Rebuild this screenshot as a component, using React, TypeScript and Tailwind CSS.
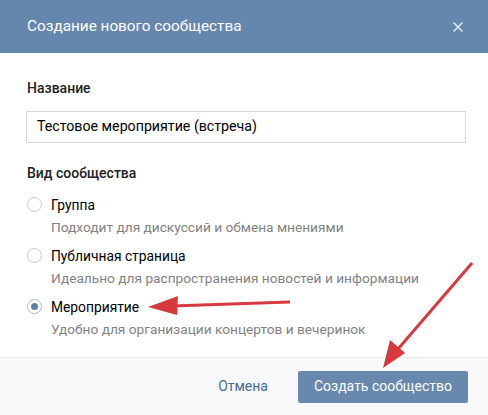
import { X } from "lucide-react";

const options = [
  { title: "Группа", desc: "Подходит для дискуссий и обмена мнениями", checked: false },
  { title: "Публичная страница", desc: "Идеально для распространения новостей и информации", checked: false },
  { title: "Мероприятие", desc: "Удобно для организации концертов и вечеринок", checked: true },
];

export default function App() {
  return (
    <div
      className="relative w-[488px] h-[415px] bg-white overflow-hidden flex flex-col"
      style={{ fontFamily: "Roboto, 'Open Sans', sans-serif" }}
    >
      {/* Header */}
      <div className="h-[53px] shrink-0 bg-[#6587ae] flex items-center justify-between pl-[27px] pr-[22px]">
        <span className="text-[15.3px] text-white leading-none">Создание нового сообщества</span>
        <X className="w-[16px] h-[16px] text-[#dfe6ee]" strokeWidth={2.5} />
      </div>

      {/* Body */}
      <div className="flex-1 pt-[26px] pl-[26px] pr-[22px]">
        <div className="text-[14px] font-medium text-[#222] leading-[18px] pl-px">Название</div>
        <div className="mt-[14px] h-[32px] border border-[#d3d9de] flex items-center px-[10px] text-[14.2px] text-[#000]">
          Тестовое мероприятие (встреча)
        </div>
        <div className="mt-[21px] text-[14px] font-medium text-[#222] leading-[18px] pl-px">Вид сообщества</div>

        <div className="mt-[14px] flex flex-col gap-[11px]">
          {options.map((o) => (
            <div key={o.title} className="flex gap-[9px] pl-px">
              <div
                className={
                  o.checked
                    ? "w-[15px] h-[15px] mt-[1px] rounded-full border border-[#a9bad0] flex items-center justify-center shrink-0"
                    : "w-[15px] h-[15px] mt-[1px] rounded-full border border-[#c5ccd4] flex items-center justify-center shrink-0"
                }
              >
                {o.checked && <div className="w-[7px] h-[7px] rounded-full bg-[#5e81a8]" />}
              </div>
              <div className="flex flex-col gap-[4px]">
                <span className="text-[13.8px] text-[#000] leading-[18px]">{o.title}</span>
                <span className="text-[13.7px] text-[#828282] leading-[18px]">{o.desc}</span>
              </div>
            </div>
          ))}
        </div>
      </div>

      {/* Footer */}
      <div className="h-[58px] shrink-0 border-t border-[#e7e8ec] bg-[#f7f8fa] flex items-center justify-end gap-[30px] pr-[20px]">
        <span className="text-[14px] text-[#4a6a8f]">Отмена</span>
        <button className="w-[170px] h-[32px] rounded-[2px] bg-[#6888ad] text-[14px] text-white">
          Создать сообщество
        </button>
      </div>

      {/* Red arrows */}
      <svg className="absolute inset-0 pointer-events-none" width="488" height="415">
        <line x1="290" y1="302" x2="172" y2="306" stroke="#d63a3f" strokeWidth="3" />
        <polygon points="148,307 178,296 177,315" fill="#d63a3f" />
        <line x1="472" y1="263" x2="398" y2="349" stroke="#d63a3f" strokeWidth="3" />
        <polygon points="383,368 390,340 405,353" fill="#d63a3f" />
      </svg>
    </div>
  );
}
